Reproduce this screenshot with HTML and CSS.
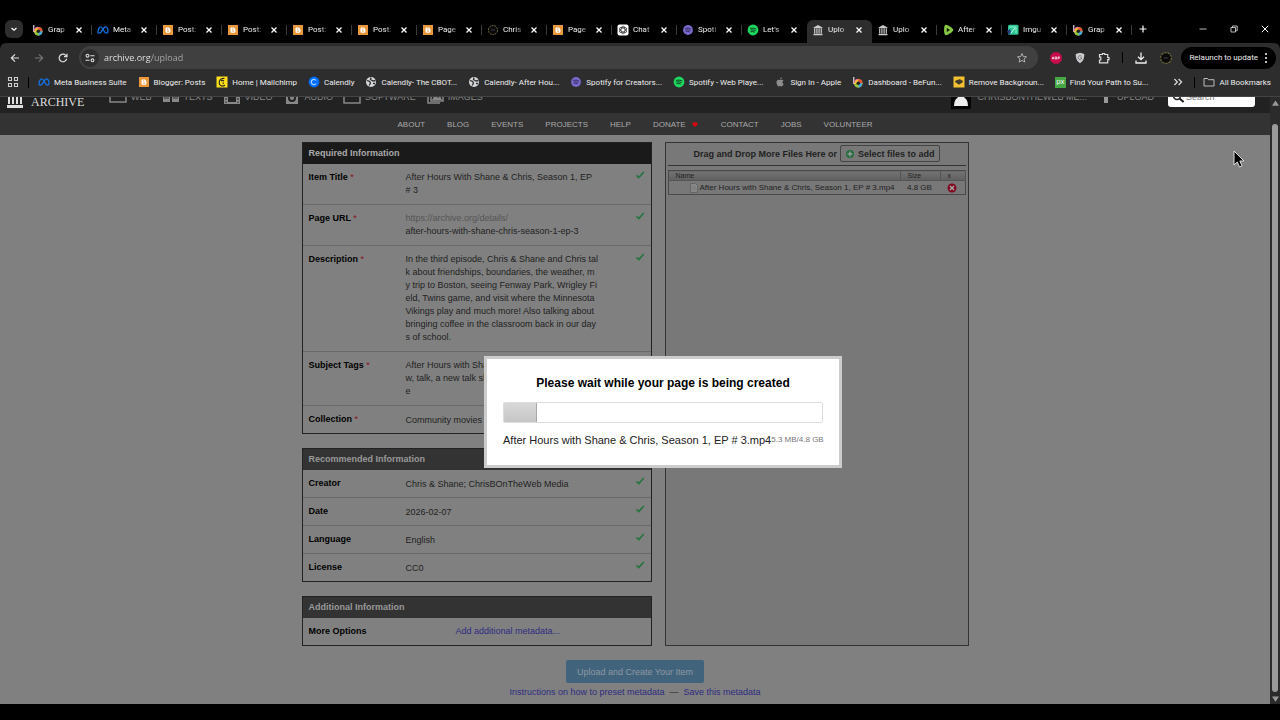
FILE: index.html
```html
<!DOCTYPE html>
<html lang="en">
<head>
    <meta charset="UTF-8">
    <meta name="viewport" content="width=device-width, initial-scale=1.0">
    <title>Upload to Internet Archive</title>
    <link rel="stylesheet" href="styles.css">
</head>
<body>
    <!-- shared icons -->
    <svg class="sprite" aria-hidden="true">
        <symbol id="i-close" viewBox="0 0 10 10"><path d="M2.5 2.5l5 5M7.5 2.5l-5 5" stroke="#fff" stroke-width="1.3"/></symbol>
        <symbol id="i-befunky" viewBox="0 0 12 12"><circle cx="6.3" cy="7.3" r="4.2" fill="#f0c52b"/><path d="M6.3 7.3V3.1a4.2 4.2 0 0 1 4.2 4.2z" fill="#e8503a"/><path d="M6.3 7.3h4.2a4.2 4.2 0 0 1-4.2 4.2z" fill="#3fa9e0"/><path d="M6.3 7.3v4.2a4.2 4.2 0 0 1-4-3z" fill="#8cc63f"/><circle cx="6.3" cy="7.3" r="1.8" fill="#222"/><path d="M1.8 1v7" stroke="#eee" stroke-width="1.1"/><path d="M2 7a4.3 4.3 0 0 1 4-4" stroke="#e85fb0" fill="none"/></symbol>
        <symbol id="i-meta" viewBox="0 0 12 12"><path d="M1 8.5C1 5 2.4 2.8 3.8 2.8c2.1 0 3.2 6.3 5.3 6.3 1 0 1.9-.9 1.9-2.3C11 4.6 9.9 2.8 8.5 2.8 6.3 2.8 4.8 9.1 2.5 9.1 1.5 9.1 1 8.9 1 8.5z" fill="none" stroke="#1473e6" stroke-width="1.3"/></symbol>
        <symbol id="i-blogger" viewBox="0 0 12 12"><rect x="1" y="1" width="10" height="10" fill="#e8973a"/><path d="M4 3.4h2.5a1.5 1.5 0 0 1 1.5 1.6c0 .6.5.4.5 1v1.2A1.5 1.5 0 0 1 7 8.700H4.800A1.300 1.300 0 0 1 3.500 7.400V4.500z" fill="#fff"/><path d="M5 5h1.300M5 7.100h2" stroke="#e8973a" stroke-width=".9"/></symbol>
        <symbol id="i-ring" viewBox="0 0 12 12"><circle cx="6" cy="6" r="4.6" fill="#0a0a0a" stroke="#77713e" stroke-width=".9" stroke-dasharray="2 .8"/><path d="M4 6h4" stroke="#454545" stroke-width=".8"/></symbol>
        <symbol id="i-gpt" viewBox="0 0 12 12"><rect x=".5" y=".5" width="11" height="11" rx="2" fill="#fff"/><g fill="none" stroke="#333" stroke-width=".7"><ellipse cx="6" cy="6" rx="2" ry="4"/><ellipse cx="6" cy="6" rx="2" ry="4" transform="rotate(60 6 6)"/><ellipse cx="6" cy="6" rx="2" ry="4" transform="rotate(120 6 6)"/></g></symbol>
        <symbol id="i-spotify-c" viewBox="0 0 12 12"><circle cx="6" cy="6" r="4.9" fill="#7b68cc"/><path d="M3.2 4.4q3-.9 5.800.6M3.500 6q2.600-.7 4.900.5M3.800 7.500q2-.5 4 .4" fill="none" stroke="#2c2354" stroke-width=".8"/></symbol>
        <symbol id="i-spotify" viewBox="0 0 12 12"><circle cx="6" cy="6" r="5.4" fill="#1ed760"/><path d="M3 4.400q3.300-.9 6.200.6M3.300 6.100q2.800-.7 5.200.5M3.600 7.700q2.200-.5 4.200.4" fill="none" stroke="#0b3819" stroke-width=".9"/></symbol>
        <symbol id="i-archive" viewBox="0 0 12 12"><path d="M1.500 3.600L6 1l4.500 2.600v.7h-9zM1.500 9.800h9v1.400h-9z" fill="#ccc"/><path d="M2.700 4.600v5M4.900 4.600v5M7.100 4.600v5M9.300 4.600v5" stroke="#ccc" stroke-width="1.200"/></symbol>
        <symbol id="i-rumble" viewBox="0 0 12 12"><path d="M3.400.8C5 .3 11.300 4 11.300 6S5 11.700 3.400 11.200 1.400 2 3.400.8z" fill="#85c742"/><path d="M4.800 4l3.200 2-3.200 2z" fill="#111"/></symbol>
        <symbol id="i-imgur" viewBox="0 0 12 12"><rect x="1" y=".7" width="10.500" height="10" rx="1.500" fill="#2fc796"/><path d="M2.500 3h6.500v6" fill="none" stroke="#8ff0d0"/><path d="M0 7l3-2 1 3-2 3z" fill="#243c7c"/><path d="M4 9l4-5" stroke="#d8fff2"/></symbol>
        <symbol id="i-mailchimp" viewBox="0 0 12 12"><rect x=".5" y=".5" width="11" height="11" fill="#ffe01b"/><path d="M8.500 2.500C5 1.500 2.500 5 3.300 7.500c.4 2.400 3.600 3.400 5.500 1.500M5 5.200q1.500-1.500 3 0M7.200 6.500v1.500" fill="none" stroke="#222" stroke-width="1.200"/></symbol>
        <symbol id="i-calendly" viewBox="0 0 12 12"><circle cx="6" cy="6" r="5.4" fill="#006bff"/><path d="M8 4.500a2.600 2.600 0 1 0 0 3" fill="none" stroke="#9fd4ff" stroke-width="1.200"/></symbol>
        <symbol id="i-globe" viewBox="0 0 12 12"><circle cx="6" cy="6" r="5" fill="#d5d7da"/><path d="M2 4.500l2.500.8 1 1.700-1.300 2.500M6 1.500l-.5 2L8 5l2.500-.5M8 7.500h2" stroke="#333" stroke-width="1.300" fill="none"/></symbol>
        <symbol id="i-apple" viewBox="0 0 12 12"><path d="M8.300 3.800c-1-.3-1.500.3-2.100.3s-1.200-.5-2-.3C1.500 4.500 2.400 9 4.300 10.300c.8.300 1.100-.2 1.900-.2s1.100.5 1.900.2c.7-.5 1.300-1.500 1.500-2.200-1.500-.8-1.500-2.800-.1-3.500-.3-.4-.8-.7-1.200-.8zM6.100 3.500c0-1.200.8-2 1.800-2.200 0 1.200-.8 2.200-1.800 2.200z" fill="#8d8d8d"/></symbol>
        <symbol id="i-removebg" viewBox="0 0 12 12"><rect x=".5" y=".5" width="11" height="11" fill="#f2c230"/><path d="M2 6q0-2 2.500-2 2-1.800 4 .2Q10 4.500 10 6L6 8.700z" fill="#403d2c"/></symbol>
        <symbol id="i-folder" viewBox="0 0 12 12"><path d="M1 2.500h3.500l1 1.200H11V10H1z" fill="none" stroke="#ccc" stroke-width=".9"/></symbol>
        <symbol id="i-check" viewBox="0 0 10 8"><path d="M1.500 4.300l2.300 2.200L8.800 1" fill="none" stroke="#25733f" stroke-width="1.700"/></symbol>
    </svg>

    <header class="browser">
        <div class="tab-strip">
            <button class="tab-search" aria-label="Search tabs"><svg viewBox="0 0 10 10"><path d="M2.500 4L5 6.300 7.500 4" fill="none" stroke="#fff" stroke-width="1.200"/></svg></button>
            <div class="tabs">
                <div class="tab"><svg class="favicon"><use href="#i-befunky"/></svg><span class="tab-title">Grap</span><button class="tab-close" aria-label="Close"><svg><use href="#i-close"/></svg></button></div>
                <div class="tab"><svg class="favicon"><use href="#i-meta"/></svg><span class="tab-title">Meta</span><button class="tab-close" aria-label="Close"><svg><use href="#i-close"/></svg></button></div>
                <div class="tab"><svg class="favicon"><use href="#i-blogger"/></svg><span class="tab-title">Post:</span><button class="tab-close" aria-label="Close"><svg><use href="#i-close"/></svg></button></div>
                <div class="tab"><svg class="favicon"><use href="#i-blogger"/></svg><span class="tab-title">Post:</span><button class="tab-close" aria-label="Close"><svg><use href="#i-close"/></svg></button></div>
                <div class="tab"><svg class="favicon"><use href="#i-blogger"/></svg><span class="tab-title">Post:</span><button class="tab-close" aria-label="Close"><svg><use href="#i-close"/></svg></button></div>
                <div class="tab"><svg class="favicon"><use href="#i-blogger"/></svg><span class="tab-title">Post:</span><button class="tab-close" aria-label="Close"><svg><use href="#i-close"/></svg></button></div>
                <div class="tab"><svg class="favicon"><use href="#i-blogger"/></svg><span class="tab-title">Page</span><button class="tab-close" aria-label="Close"><svg><use href="#i-close"/></svg></button></div>
                <div class="tab"><svg class="favicon"><use href="#i-ring"/></svg><span class="tab-title">Chris</span><button class="tab-close" aria-label="Close"><svg><use href="#i-close"/></svg></button></div>
                <div class="tab"><svg class="favicon"><use href="#i-blogger"/></svg><span class="tab-title">Page</span><button class="tab-close" aria-label="Close"><svg><use href="#i-close"/></svg></button></div>
                <div class="tab"><svg class="favicon"><use href="#i-gpt"/></svg><span class="tab-title">Chat</span><button class="tab-close" aria-label="Close"><svg><use href="#i-close"/></svg></button></div>
                <div class="tab"><svg class="favicon"><use href="#i-spotify-c"/></svg><span class="tab-title">Spoti</span><button class="tab-close" aria-label="Close"><svg><use href="#i-close"/></svg></button></div>
                <div class="tab before-active"><svg class="favicon"><use href="#i-spotify"/></svg><span class="tab-title">Let's</span><button class="tab-close" aria-label="Close"><svg><use href="#i-close"/></svg></button></div>
                <div class="tab active"><svg class="favicon"><use href="#i-archive"/></svg><span class="tab-title">Uplo</span><button class="tab-close" aria-label="Close"><svg><use href="#i-close"/></svg></button></div>
                <div class="tab"><svg class="favicon"><use href="#i-archive"/></svg><span class="tab-title">Uplo</span><button class="tab-close" aria-label="Close"><svg><use href="#i-close"/></svg></button></div>
                <div class="tab"><svg class="favicon"><use href="#i-rumble"/></svg><span class="tab-title">After</span><button class="tab-close" aria-label="Close"><svg><use href="#i-close"/></svg></button></div>
                <div class="tab"><svg class="favicon"><use href="#i-imgur"/></svg><span class="tab-title">Imgu</span><button class="tab-close" aria-label="Close"><svg><use href="#i-close"/></svg></button></div>
                <div class="tab"><svg class="favicon"><use href="#i-befunky"/></svg><span class="tab-title">Grap</span><button class="tab-close" aria-label="Close"><svg><use href="#i-close"/></svg></button></div>
            </div>
            <button class="new-tab" aria-label="New tab"><svg viewBox="0 0 10 10"><path d="M5 1.500v7M1.500 5h7" stroke="#fff" stroke-width="1.200"/></svg></button>
            <div class="window-controls">
                <button aria-label="Minimize"><svg viewBox="0 0 10 10"><path d="M1.500 5h7" stroke="#bbb"/></svg></button>
                <button aria-label="Restore"><svg viewBox="0 0 10 10"><path d="M2 3.500h4.500V8H2zM3.500 3.500V2h4.700v4.700H6.500" fill="none" stroke="#ccc" stroke-width=".9"/></svg></button>
                <button aria-label="Close window"><svg viewBox="0 0 10 10"><path d="M1.800 1.800l6.400 6.400M8.200 1.800L1.800 8.200" stroke="#fff"/></svg></button>
            </div>
        </div>

        <div class="toolbar">
            <button aria-label="Back"><svg viewBox="0 0 12 12"><path d="M10 6H2.500M6 2.300L2.300 6 6 9.700" fill="none" stroke="#ddd" stroke-width="1.200"/></svg></button>
            <button aria-label="Forward"><svg viewBox="0 0 12 12"><path d="M2 6h7.500M6 2.300L9.700 6 6 9.700" fill="none" stroke="#777" stroke-width="1.100"/></svg></button>
            <button aria-label="Reload"><svg viewBox="0 0 12 12"><path d="M9.700 6.700A3.800 3.800 0 1 1 8.700 3.300L10 4.500M10 1.800v2.900H7" fill="none" stroke="#ddd" stroke-width="1.200"/></svg></button>
            <div class="address-bar">
                <button class="site-info" aria-label="Site information"><svg viewBox="0 0 12 12"><g fill="none" stroke="#ddd" stroke-width="1.100"><circle cx="3.500" cy="3.700" r="1.400"/><path d="M6.300 3.700h4.200M1.500 8.300h4"/><circle cx="8.500" cy="8.300" r="1.400"/></g></svg></button>
                <input class="url" type="text" aria-label="Address" value="archive.org/upload">
                <button aria-label="Bookmark"><svg viewBox="0 0 12 12"><path d="M6 1.500l1.300 3 3.200.3-2.400 2.100.7 3.200L6 8.400l-2.800 1.700.7-3.200L1.500 4.800l3.200-.3z" fill="none" stroke="#bbb" stroke-width=".9"/></svg></button>
            </div>
            <div class="extensions">
                <button aria-label="Adblock Plus"><svg viewBox="0 0 12 12"><path d="M3.600.3h4.800l3.300 3.300v4.800l-3.300 3.300H3.600L.3 8.400V3.600z" fill="#c40d4a"/><path d="M2.400 7.200V5.400l.7-.6.7.6v1.800M2.400 6.400h1.400M5.200 4.900v2.200h1.300V4.900zM8 7.400V4.900h1.400v1.300H8" fill="none" stroke="#fff" stroke-width=".7"/></svg></button>
                <button aria-label="Shield"><svg viewBox="0 0 12 12"><path d="M6 .8l4.300 1.300c0 4.500-1 7.200-4.300 9.100-3.300-1.900-4.300-4.600-4.300-9.100z" fill="#c9cbce"/><path d="M7.500 4.200a2 2 0 1 0 0 2.800V5.600H6" fill="none" stroke="#777" stroke-width=".8"/></svg></button>
                <button aria-label="Extensions"><svg viewBox="0 0 12 12"><path d="M1.500 2.500h3V1.500h2.200v1h3v3h1.300v2.200H9.700v3.200H1.500V8h1.300V5.200H1.500z" fill="none" stroke="#ddd" stroke-width="1.200"/></svg></button>
            </div>
            <span class="separator"></span>
            <div class="extensions">
                <button aria-label="Downloads"><svg viewBox="0 0 12 12"><path d="M6 .5v6.800M3 4.700l3 3 3-3M1 8.500v2.500h10V8.500" fill="none" stroke="#eee" stroke-width="1.300"/></svg></button>
                <button aria-label="Profile"><svg class="avatar"><use href="#i-ring"/></svg></button>
            </div>
            <button class="relaunch">Relaunch to update <svg viewBox="0 0 4 12"><circle cx="2" cy="2" r="1" fill="#fff"/><circle cx="2" cy="6" r="1" fill="#fff"/><circle cx="2" cy="10" r="1" fill="#fff"/></svg></button>
        </div>

        <nav class="bookmarks">
            <button class="apps" aria-label="Apps"><svg viewBox="0 0 12 12"><path d="M1.500 1.500h3v3h-3zM7.500 1.500h3v3h-3zM1.500 7.500h3v3h-3zM7.500 7.500h3v3h-3z" fill="none" stroke="#ccc" stroke-width="1.100"/></svg></button>
            <span class="separator"></span>
            <div class="bookmark-list">
                <a href="#"><svg><use href="#i-meta"/></svg>Meta Business Suite</a>
                <a href="#"><svg><use href="#i-blogger"/></svg>Blogger: Posts</a>
                <a href="#"><svg><use href="#i-mailchimp"/></svg>Home | Mailchimp</a>
                <a href="#"><svg><use href="#i-calendly"/></svg>Calendly</a>
                <a href="#"><svg><use href="#i-globe"/></svg>Calendly- The CBOT...</a>
                <a href="#"><svg><use href="#i-globe"/></svg>Calendly- After Hou...</a>
                <a href="#"><svg><use href="#i-spotify-c"/></svg>Spotify for Creators...</a>
                <a href="#"><svg><use href="#i-spotify"/></svg>Spotify - Web Playe...</a>
                <a href="#"><svg><use href="#i-apple"/></svg>Sign In - Apple</a>
                <a href="#"><svg><use href="#i-befunky"/></svg>Dashboard - BeFun...</a>
                <a href="#"><svg><use href="#i-removebg"/></svg>Remove Backgroun...</a>
                <a href="#"><span class="px-icon">px</span>Find Your Path to Su...</a>
            </div>
            <button class="more" aria-label="More bookmarks"><svg viewBox="0 0 10 10"><path d="M2 2.500L4.500 5 2 7.500M5.500 2.500L8 5 5.500 7.500" fill="none" stroke="#ddd"/></svg></button>
            <span class="separator"></span>
            <a class="all-bookmarks" href="#"><svg><use href="#i-folder"/></svg>All Bookmarks</a>
        </nav>
    </header>

    <div class="viewport">
        <div class="page">
            <div class="ia-top">
                <div class="ia-top-inner">
                    <a class="logo" href="#" aria-label="Internet Archive">
                        <svg viewBox="0 0 18 24"><path d="M1 5l8-4 8 4v2H1zM1 20h16v3H1z" fill="#ddd"/><path d="M3 8v11M7 8v11M11 8v11M15 8v11" stroke="#ddd" stroke-width="2"/></svg>
                        <span>ARCHIVE</span>
                    </a>
                    <nav class="media-nav">
                        <a href="#"><svg viewBox="0 0 18 16"><path d="M1 2h16v11H1z" fill="none" stroke="#888" stroke-width="1.500"/></svg>WEB</a>
                        <a href="#"><svg viewBox="0 0 18 16"><path d="M1 3h7v10H1zM10 3h7v10h-7z" fill="#888"/><path d="M2 6h5M2 9h5M11 6h5M11 9h5" stroke="#333"/></svg>TEXTS</a>
                        <a href="#"><svg viewBox="0 0 18 16"><path d="M1 1h16v14H1z" fill="#888"/><path d="M5 3h8v10H5z" fill="#222"/><path d="M3 2v12M15 2v12" stroke="#222" stroke-dasharray="2 1.500"/></svg>VIDEO</a>
                        <a href="#"><svg viewBox="0 0 18 16"><path d="M3 1h12v14H3z" fill="#888"/><circle cx="9" cy="9" r="4" fill="#222"/><circle cx="9" cy="9" r="2" fill="#888"/></svg>AUDIO</a>
                        <a href="#"><svg viewBox="0 0 18 16"><path d="M1 1h16v13H1z" fill="none" stroke="#888" stroke-width="1.500"/></svg>SOFTWARE</a>
                        <a href="#"><svg viewBox="0 0 18 16"><path d="M5 1h12v11H5zM2 4v10h12" fill="none" stroke="#888" stroke-width="1.500"/><path d="M6 11l3-5 3 3 2-2 2 4z" fill="#888"/></svg>IMAGES</a>
                    </nav>
                    <div class="user-nav">
                        <a class="user" href="#"><svg viewBox="0 0 20 24"><path d="M0 0h20v24H0z" fill="#050505"/><path d="M3 21q0-9 7-9t7 9z" fill="#eee"/><circle cx="10" cy="10" r="4" fill="#eee"/></svg>CHRISBONTHEWEB ME...</a>
                        <a href="#"><svg class="up" viewBox="0 0 10 16"><path d="M5 1l5 6H7v7H3V7H0z" fill="#999"/></svg>UPLOAD</a>
                        <label class="search"><svg viewBox="0 0 12 12"><circle cx="5" cy="5" r="3.500" fill="none" stroke="#222" stroke-width="1.500"/><path d="M7.500 7.500L11.500 11" stroke="#222" stroke-width="2"/></svg><input type="search" aria-label="Search" placeholder="Search"></label>
                    </div>
                </div>
            </div>
            <nav class="site-nav">
                <a href="#">ABOUT</a>
                <a href="#">BLOG</a>
                <a href="#">EVENTS</a>
                <a href="#">PROJECTS</a>
                <a href="#">HELP</a>
                <a href="#">DONATE <svg viewBox="0 0 8 8"><path d="M4 7L1.500 4.500C.5 3 2.600 1.300 4 2.700c1.400-1.400 3.500.3 2.500 1.800z" fill="#d5000b"/></svg></a>
                <a href="#">CONTACT</a>
                <a href="#">JOBS</a>
                <a href="#">VOLUNTEER</a>
            </nav>

            <main class="uploader">
                <div class="columns">
                    <div class="metadata">
                        <section class="panel">
                            <h2 class="required">Required Information</h2>
                            <div class="row">
                                <div class="name">Item Title <span class="star">*</span></div>
                                <div class="value">After Hours With Shane &amp; Chris, Season 1, EP<br># 3</div>
                                <svg class="check"><use href="#i-check"/></svg>
                            </div>
                            <div class="row">
                                <div class="name">Page URL <span class="star">*</span></div>
                                <div class="value"><span class="muted">https://archive.org/details/</span><br>after-hours-with-shane-chris-season-1-ep-3</div>
                                <svg class="check"><use href="#i-check"/></svg>
                            </div>
                            <div class="row">
                                <div class="name">Description <span class="star">*</span></div>
                                <div class="value">In the third episode, Chris &amp; Shane and Chris tal<br>k about friendships, boundaries, the weather, m<br>y trip to Boston, seeing Fenway Park, Wrigley Fi<br>eld, Twins game, and visit where the Minnesota<br>Vikings play and much more! Also talking about<br>bringing coffee in the classroom back in our day<br>s of school.</div>
                                <svg class="check"><use href="#i-check"/></svg>
                            </div>
                            <div class="row">
                                <div class="name">Subject Tags <span class="star">*</span></div>
                                <div class="value">After Hours with Shane &amp; Chris, talk sho<br>w, talk, a new talk show<br>e</div>
                                <svg class="check"><use href="#i-check"/></svg>
                            </div>
                            <div class="row single">
                                <div class="name">Collection <span class="star">*</span></div>
                                <div class="value">Community movies</div>
                                <svg class="check"><use href="#i-check"/></svg>
                            </div>
                        </section>

                        <section class="panel">
                            <h2>Recommended Information</h2>
                            <div class="row single">
                                <div class="name">Creator</div>
                                <div class="value">Chris &amp; Shane; ChrisBOnTheWeb Media</div>
                                <svg class="check"><use href="#i-check"/></svg>
                            </div>
                            <div class="row single">
                                <div class="name">Date</div>
                                <div class="value">2026-02-07</div>
                                <svg class="check"><use href="#i-check"/></svg>
                            </div>
                            <div class="row single">
                                <div class="name">Language</div>
                                <div class="value">English</div>
                                <svg class="check"><use href="#i-check"/></svg>
                            </div>
                            <div class="row single">
                                <div class="name">License</div>
                                <div class="value">CC0</div>
                                <svg class="check"><use href="#i-check"/></svg>
                            </div>
                        </section>

                        <section class="panel">
                            <h2>Additional Information</h2>
                            <div class="row options">
                                <div class="name">More Options</div>
                                <a href="#">Add additional metadata...</a>
                            </div>
                        </section>
                    </div>

                    <section class="files">
                        <div class="drop-head">
                            <span>Drag and Drop More Files Here or</span>
                            <button class="select-files"><svg viewBox="0 0 10 10"><circle cx="5" cy="5" r="4" fill="#236f3c"/><path d="M5 2.500v5M2.500 5h5" stroke="#999" stroke-width="1.500"/></svg>Select files to add</button>
                        </div>
                        <table class="file-table">
                            <thead>
                                <tr><th class="col-name">Name</th><th class="col-size">Size</th><th class="col-x">x</th></tr>
                            </thead>
                            <tbody>
                                <tr>
                                    <td class="file-name"><svg viewBox="0 0 8 10"><path d="M.5.5h5l2 2v7h-7z" fill="#888" stroke="#666"/><path d="M2 4h4M2 6h4" stroke="#737373" stroke-width=".7"/></svg>After Hours with Shane &amp; Chris, Season 1, EP # 3.mp4</td>
                                    <td>4.8 GB</td>
                                    <td><button class="remove" aria-label="Remove file"><svg viewBox="0 0 10 10"><circle cx="5" cy="5" r="4.500" fill="#810b21"/><path d="M3 3l4 4M7 3L3 7" stroke="#aaa" stroke-width="1.300"/></svg></button></td>
                                </tr>
                            </tbody>
                        </table>
                    </section>
                </div>

                <div class="actions">
                    <button class="create">Upload and Create Your Item</button>
                    <p><a href="#">Instructions on how to preset metadata</a> &nbsp;—&nbsp; <a href="#">Save this metadata</a></p>
                </div>
            </main>

            <div class="progress-dialog" role="dialog" aria-labelledby="progress-title">
                <h1 id="progress-title">Please wait while your page is being created</h1>
                <progress value="10.5" max="100" aria-label="Upload progress"></progress>
                <div class="progress-file"><span>After Hours with Shane &amp; Chris, Season 1, EP # 3.mp4</span><span class="progress-size">5.3 MB/4.8 GB</span></div>
            </div>

            <svg class="cursor" viewBox="0 0 12 18"><path d="M1 1v14l3.300-3 2.200 5 2.500-1.200-2.200-4.800H11z" fill="#000" stroke="#ddd"/></svg>
        </div>

        <div class="scrollbar">
            <svg viewBox="0 0 8 6"><path d="M4 0l4 6H0z" fill="#999"/></svg>
            <span class="thumb"></span>
            <svg viewBox="0 0 8 6"><path d="M4 6l4-6H0z" fill="#999"/></svg>
        </div>
    </div>
</body>
</html>
```
FILE: styles.css
```css
* {
    box-sizing: border-box;
}
body {
    margin: 0;
    padding: 20px 0 16px;
    height: 100vh;
    background-color: #000;
    font-family: "Liberation Sans", Arial, sans-serif;
    font-size: 9px;
    display: flex;
    flex-direction: column;
    overflow: hidden;
}
a {
    text-decoration: none;
}
button {
    font: inherit;
    color: inherit;
    background: none;
    border: none;
    padding: 0;
}
svg {
    flex: none;
    display: block;
}
.sprite {
    position: absolute;
    width: 0;
    height: 0;
}

/* browser chrome */
.browser {
    font-family: Roboto, "Noto Sans", sans-serif;
    font-size: 8px;
    color: #eee;
}
.tab-strip {
    height: 23px;
    display: flex;
    align-items: flex-start;
}
.tab-search {
    width: 18px;
    height: 18px;
    margin: 0 4px 0 5px;
    padding: 4px;
    border-radius: 6px;
    background-color: #2e2e2e;
}
.tabs {
    flex: 1;
    display: flex;
    height: 100%;
}
.tab {
    flex: 1;
    min-width: 0;
    display: flex;
    align-items: center;
    padding: 0 8px 4px 5px;
    background: linear-gradient(#3a3a3a, #3a3a3a) right 5px / 1px 10px no-repeat;
}
.tab.before-active {
    background: none;
}
.tab.active {
    background: #2d2d2d;
    border-radius: 6px 6px 0 0;
}
.favicon {
    width: 12px;
    height: 12px;
}
.tab-title {
    flex: 1;
    margin-left: 4px;
    overflow: hidden;
    white-space: nowrap;
    -webkit-mask-image: linear-gradient(to right, #000 12px, transparent 22px);
    mask-image: linear-gradient(to right, #000 12px, transparent 22px);
}
.tab-close, .tab-close svg {
    width: 10px;
    height: 10px;
}
.new-tab {
    width: 10px;
    margin: 4px 0 0 6px;
}
.window-controls {
    display: flex;
    gap: 21px;
    margin: 4px 10px 0 50px;
}
.window-controls button {
    width: 10px;
}
.toolbar {
    height: 29px;
    display: flex;
    align-items: center;
    gap: 12px;
    padding: 0 4px 0 9px;
    background-color: #2d2d2d;
    border-radius: 6px 6px 0 0;
}
.toolbar button svg {
    width: 12px;
    height: 12px;
}
.address-bar {
    flex: 1;
    height: 23px;
    display: flex;
    align-items: center;
    margin-left: -2px;
    padding: 0 10px 0 2px;
    border-radius: 12px;
    background-color: #404040;
}
.site-info {
    width: 18px;
    height: 18px;
    padding: 3px;
    border-radius: 50%;
    background-color: #2d2d2d;
}
.url {
    flex: 1;
    min-width: 0;
    margin-left: 5px;
    padding: 0;
    border: none;
    outline: none;
    font-family: "Open Sans", "Noto Sans", sans-serif;
    font-size: 9px;
    /* host is brighter than the path */
    color: transparent;
    background: linear-gradient(to right, #eee 47px, #aaa 47px);
    -webkit-background-clip: text;
    background-clip: text;
}
.extensions {
    display: flex;
    gap: 12px;
}
.toolbar .avatar {
    width: 14px;
    height: 14px;
}
.separator {
    width: 1px;
    height: 11px;
    background-color: #000;
}
.relaunch {
    height: 22px;
    display: flex;
    align-items: center;
    gap: 6px;
    padding: 0 8px;
    margin-left: -4px;
    border-radius: 11px;
    background-color: #000;
    white-space: nowrap;
}
.toolbar .relaunch svg {
    width: 4px;
}
.bookmarks {
    height: 25px;
    display: flex;
    align-items: center;
    padding: 0 9px 4px 7px;
    background-color: #2d2d2d;
    border-bottom: 1px solid #444;
}
.bookmarks a {
    display: flex;
    align-items: center;
    gap: 4px;
    color: #eee;
    white-space: nowrap;
}
.bookmarks svg {
    width: 12px;
    height: 12px;
}
.apps {
    margin-right: 9px;
}
.bookmark-list {
    flex: 1;
    display: flex;
    gap: 11px;
    margin-left: 9px;
}
.px-icon {
    width: 11px;
    height: 11px;
    line-height: 9px;
    text-align: center;
    background-color: #45a845;
}
.more {
    margin-right: 10px;
}
.all-bookmarks {
    margin-left: 8px;
}

/* archive.org page */
.viewport {
    flex: 1;
    min-height: 0;
    display: flex;
}
.page {
    flex: 1;
    position: relative;
    overflow: hidden;
    background-color: #808080;
}
.ia-top {
    height: 16px;
    display: flex;
    align-items: flex-end;
    overflow: hidden;
    background-color: #222;
}
.ia-top-inner {
    flex: 1;
    height: 32px;
    display: flex;
    align-items: center;
    padding: 0 15px 0 6px;
    color: #888;
}
.ia-top a {
    display: flex;
    align-items: center;
    gap: 4px;
    color: inherit;
}
.logo svg {
    width: 18px;
    height: 24px;
}
.logo span {
    margin-left: 3px;
    font-family: "Liberation Serif", serif;
    font-size: 12px;
    line-height: 14px;
    color: #ddd;
}
.ia-top .logo {
    width: 103px;
    align-items: flex-end;
}
.media-nav {
    display: flex;
    gap: 10px;
}
.media-nav svg {
    width: 18px;
    height: 16px;
}
.user-nav {
    display: flex;
    align-items: center;
    gap: 14px;
    margin-left: auto;
}
.user-nav a {
    gap: 6px;
}
.user svg {
    width: 20px;
    height: 24px;
}
.up {
    width: 10px;
    height: 16px;
}
.search {
    width: 87px;
    height: 20px;
    display: flex;
    align-items: center;
    padding-left: 4px;
    border-radius: 3px;
    background-color: #fff;
}
.search svg {
    width: 12px;
    height: 12px;
}
.search input {
    flex: 1;
    min-width: 0;
    border: none;
    background: none;
    font: inherit;
}
.site-nav {
    height: 22px;
    display: flex;
    justify-content: center;
    align-items: center;
    gap: 22px;
    background-color: #333;
    font-size: 8px;
}
.site-nav a {
    display: flex;
    align-items: center;
    gap: 5px;
    color: #aaa;
}
.site-nav svg {
    width: 8px;
    height: 8px;
}
.uploader {
    max-width: 667px;
    margin: 7px auto 0;
    color: #222;
}
.uploader a {
    color: #2f2c80;
}
.columns {
    display: flex;
    gap: 13px;
}
.metadata {
    flex: 1;
    display: flex;
    flex-direction: column;
    gap: 14px;
}
.panel {
    border: 1px solid #222;
}
.panel h2 {
    margin: 0;
    padding: 0 6px;
    font-size: 9px;
    line-height: 21px;
    color: #999;
    background-color: #333;
}
.panel .required {
    background-color: #1a1a1a;
    color: #aaa;
}
.row {
    display: flex;
    align-items: flex-start;
    padding: 7px 6px;
    line-height: 13px;
    border-bottom: 1px solid #696969;
}
.row:last-child {
    border-bottom: none;
}
.row.single {
    padding-bottom: 6px;
}
.row.single .value {
    padding-top: 1px;
}
.name {
    width: 97px;
    font-weight: bold;
    color: #000;
}
.star {
    color: #8a1020;
    font-weight: normal;
}
.value {
    flex: 1;
    white-space: nowrap;
}
.muted {
    color: #555;
}
.check {
    width: 10px;
    height: 8px;
}
.options .name {
    width: 147px;
}
.files {
    width: 304px;
    padding: 2px;
    border: 1px solid #333;
    background-color: #787878;
}
.drop-head {
    height: 21px;
    display: flex;
    justify-content: center;
    align-items: center;
    gap: 3px;
    padding-bottom: 3px;
    border-bottom: 1px solid #333;
    font-weight: bold;
}
.select-files {
    height: 17px;
    display: flex;
    align-items: center;
    gap: 3px;
    padding: 0 4px;
    border: 1px solid #444;
    border-radius: 2px;
}
.select-files svg {
    width: 10px;
    height: 10px;
}
.file-table {
    width: 100%;
    margin-top: 4px;
    border: 1px solid #4a4a4a;
    border-collapse: collapse;
    table-layout: fixed;
    font-size: 8px;
}
.file-table th {
    height: 10px;
    padding: 0 7px;
    font-size: 7px;
    font-weight: normal;
    line-height: 9px;
    text-align: left;
    background: linear-gradient(#737373, #606060);
    border-right: 1px solid #555;
    border-bottom: 1px solid #555;
}
.file-table td {
    height: 13px;
    padding: 0 7px;
    line-height: 11px;
}
.col-size {
    width: 40px;
}
.col-x {
    width: 25px;
}
.file-table .file-name {
    display: flex;
    align-items: center;
    gap: 2px;
    padding: 0 0 0 21px;
    white-space: nowrap;
}
.file-name svg {
    width: 8px;
    height: 10px;
}
.remove {
    display: block;
}
.remove svg {
    width: 10px;
    height: 10px;
}
.file-table td:nth-child(n+2) {
    white-space: nowrap;
}
.actions {
    margin-top: 14px;
    text-align: center;
}
.create {
    height: 23px;
    padding: 0 11px;
    border-radius: 2px;
    background-color: #42637c;
    color: #8c99a3;
}
.actions p {
    margin: 3px 0 0;
    line-height: 13px;
}

/* upload progress */
.progress-dialog {
    position: absolute;
    top: 259px;
    left: calc(50% - 151px);
    width: 358px;
    height: 112px;
    padding: 17px 16px;
    border: 3px solid #ccc;
    background-color: #fff;
    color: #222;
}
.progress-dialog h1 {
    margin: 0 0 11px;
    font-size: 12px;
    line-height: 15px;
    text-align: center;
    color: #000;
}
progress {
    display: block;
    width: 100%;
    height: 21px;
    border: 1px solid #ddd;
    border-radius: 2px;
    -webkit-appearance: none;
    appearance: none;
    overflow: hidden;
}
progress::-webkit-progress-bar {
    background-color: #fff;
}
progress::-webkit-progress-value {
    background: linear-gradient(#d8d8d8, #c6c6c6);
    border-right: 1px solid #aaa;
}
.progress-file {
    display: flex;
    justify-content: space-between;
    margin-top: 10px;
    font-size: 11px;
    line-height: 14px;
    white-space: nowrap;
}
.progress-size {
    font-size: 8px;
    color: #777;
}
.cursor {
    position: absolute;
    top: 53px;
    right: 25px;
    width: 12px;
    height: 18px;
}
.scrollbar {
    width: 10px;
    display: flex;
    flex-direction: column;
    align-items: center;
    padding: 3px 0 2px;
    background-color: #2b2b2b;
}
.scrollbar svg {
    width: 7px;
    height: 6px;
}
.thumb {
    flex: 1;
    width: 6px;
    margin: 18px 0 4px;
    border-radius: 3px;
    background-color: #9a9a9a;
}
```
